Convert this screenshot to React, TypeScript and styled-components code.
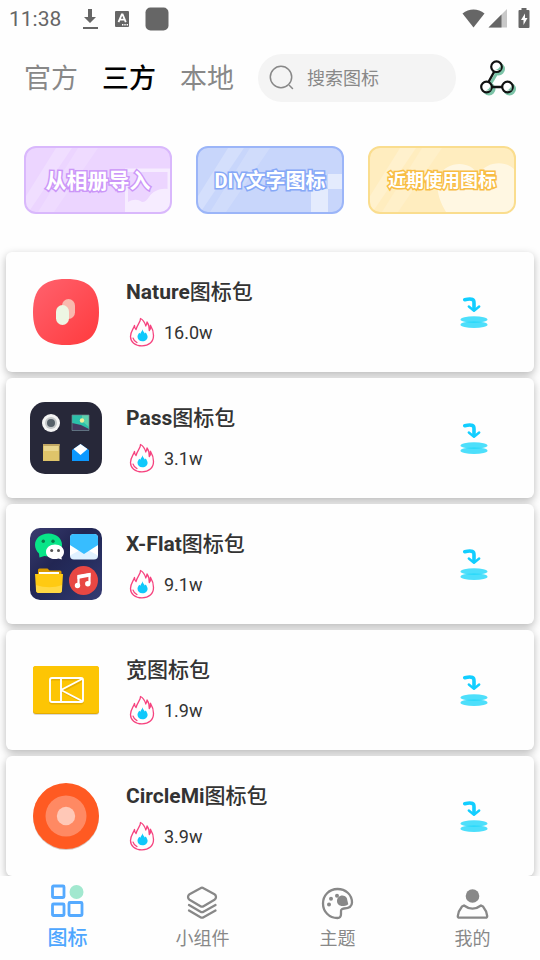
import React from 'react';
import styled, { createGlobalStyle } from 'styled-components';

const GlobalStyle = createGlobalStyle`
  *, *::before, *::after { box-sizing: border-box; }
  body {
    margin: 0;
    background: #fefefe;
    color: #333;
    font-family: Roboto, 'Noto Sans CJK SC', sans-serif;
  }
  button { font: inherit; color: inherit; border: 0; padding: 0; background: none; cursor: pointer; }
  svg { display: block; flex: none; }
`;

const Screen = styled.div`
  display: flex;
  flex-direction: column;
  height: 100vh;
`;

const StatusBar = styled.div`
  display: flex;
  align-items: center;
  justify-content: space-between;
  height: 38px;
  padding: 0 10px 0 9px;
  color: #666;
`;

const StatusGroup = styled.div`
  display: flex;
  align-items: center;
  gap: 15px;
`;

const Clock = styled.time`
  font-size: 21px;
  line-height: 24px;
  margin-right: 5px;
`;

const Header = styled.header`
  display: flex;
  align-items: center;
  gap: 24px;
  padding: 16px 24px 18px;
`;

const Tabs = styled.nav`
  display: flex;
  gap: 24px;
`;

const Tab = styled.button<{ $active?: boolean }>`
  padding-top: 2px;
  font-size: 27px;
  line-height: 40px;
  font-weight: ${(p) => (p.$active ? 500 : 400)};
  color: ${(p) => (p.$active ? '#000' : '#888')};
`;

const SearchBox = styled.label`
  display: flex;
  align-items: center;
  gap: 12px;
  flex: 1;
  min-width: 0;
  height: 48px;
  padding: 0 12px 0 10px;
  border-radius: 24px;
  background: #f4f4f4;
`;

const SearchInput = styled.input`
  flex: 1;
  min-width: 0;
  border: 0;
  padding: 2px 0 0;
  outline: 0;
  background: none;
  font: inherit;
  font-size: 18px;
  line-height: 28px;
  color: #333;
  &::placeholder { color: #888; opacity: 1; }
`;

const Banners = styled.section`
  display: grid;
  grid-template-columns: repeat(3, 1fr);
  gap: 24px;
  padding: 26px 24px 20px;
`;

const Banner = styled.button<{ $edge: string; $fill: string; $ink: string; $size: number }>`
  display: grid;
  place-items: center;
  height: 68px;
  overflow: hidden;
  border: 2px solid ${(p) => p.$edge};
  border-radius: 12px;
  background: ${(p) => p.$fill};
  color: #fff;
  font-size: ${(p) => p.$size}px;
  line-height: 28px;
  font-weight: 700;
  white-space: nowrap;
  -webkit-text-stroke: 3px ${(p) => p.$ink};
  paint-order: stroke fill;
  & > * { grid-area: 1 / 1; }
`;

const BannerArt = styled.svg`
  width: 100%;
  height: 64px;
`;

const BannerText = styled.span`
  z-index: 1;
  padding-top: 2px;
`;

const PackList = styled.ul`
  flex: 1;
  min-height: 0;
  overflow-y: auto;
  scrollbar-width: none;
  display: flex;
  flex-direction: column;
  gap: 6px;
  margin: 0;
  padding: 18px 6px 0;
  list-style: none;
`;

const PackCard = styled.li`
  display: flex;
  align-items: center;
  gap: 24px;
  flex: none;
  height: 120px;
  padding: 0 42px 0 24px;
  border-radius: 6px;
  background: #fefefe;
  box-shadow: 0 3px 9px rgba(0, 0, 0, 0.28);
`;

const PackInfo = styled.div`
  flex: 1;
  min-width: 0;
`;

const PackTitle = styled.h2`
  margin: 0 0 9px;
  font-size: 21px;
  line-height: 32px;
  font-weight: 500;
  color: #333;
`;

const PackName = styled.span`
  font-weight: 700;
`;

const Heat = styled.div`
  display: flex;
  align-items: center;
  gap: 6px;
  font-size: 18px;
  line-height: 32px;
  color: #333;
`;

const BottomNav = styled.nav`
  display: grid;
  grid-template-columns: repeat(4, 1fr);
  flex: none;
  height: 84px;
  background: #fefefe;
`;

const NavItem = styled.button<{ $active?: boolean }>`
  display: flex;
  flex-direction: column;
  align-items: center;
  gap: ${(p) => (p.$active ? 3 : 5)}px;
  padding-top: ${(p) => (p.$active ? 7 : 9)}px;
  font-size: ${(p) => (p.$active ? 20 : 18)}px;
  line-height: ${(p) => (p.$active ? 32 : 26)}px;
  font-weight: ${(p) => (p.$active ? 500 : 400)};
  color: ${(p) => (p.$active ? '#4da6ff' : '#888')};
`;

const DownloadStatus = () => (
  <svg width="18" height="22" viewBox="0 0 18 22" fill="#666">
    <path d="M7 1h4v8h4l-6 6-6-6h4zM2 19h15v2H2z" />
  </svg>
);

const KeyboardStatus = () => (
  <svg width="16" height="16" viewBox="0 0 16 16">
    <rect x="1" width="14" height="16" rx="1" fill="#666" />
    <path d="M4.500 11.200 7.800 3.400h.8l3.200 7.800M6 8.600h4.300" fill="none" stroke="#fff" strokeWidth="1.800" />
    <path d="M8 13h1.400v1.400H8zM10.300 13h1.400v1.400h-1.400zM12.600 13H14v1.400h-1.400z" fill="#fff" />
  </svg>
);

const SquareStatus = () => (
  <svg width="24" height="24" viewBox="0 0 24 24">
    <rect x=".5" y=".5" width="23" height="23" rx="5" fill="#666" />
  </svg>
);

const SignalStatus = () => (
  <svg width="68" height="22" viewBox="0 0 68 22" fill="#666">
    <path d="M.5 5.500C7 .2 16 .2 22.500 5.500L11.500 19.500z" />
    <path d="M26.500 19.500 45 1v18.500z" fill="#c8c8c8" />
    <path d="M26.500 19.500 39.500 6.500v13z" />
    <path d="M59.500 0h5v2h2a1 1 0 0 1 1 1v16a1 1 0 0 1-1 1h-9a1 1 0 0 1-1-1V3a1 1 0 0 1 1-1h2z" />
    <path d="M63 5.500 59 12h2.500v5l4-7H63z" fill="#fff" />
  </svg>
);

const SearchIcon = () => (
  <svg width="27" height="27" viewBox="0 0 27 27" fill="none" stroke="#888" strokeWidth="1.500" strokeLinecap="round">
    <circle cx="13" cy="12" r="10.700" />
    <path d="m21.500 20.500 3 3" />
  </svg>
);

const ShareNodes = () => (
  <svg width="36" height="36" viewBox="0 0 36 36">
    <g fill="#7cc3a7" stroke="#7cc3a7" strokeWidth="3">
      <circle cx="18.500" cy="9" r="5" />
      <circle cx="9" cy="29" r="5" />
      <circle cx="29.500" cy="29" r="5" />
      <path d="m17 13-6 10" />
    </g>
    <path d="M14 12 8.500 22M12 27h11" stroke="#111" strokeWidth="2.400" />
    <g fill="#fff" stroke="#111" strokeWidth="2.200">
      <circle cx="16.500" cy="6.700" r="5.300" />
      <circle cx="6.500" cy="27" r="5.300" />
      <circle cx="27.500" cy="27" r="5.300" />
    </g>
    <g fill="#7cc3a7">
      <path d="M20.500 5v5h-5q4-1 5-5zM10.500 25.500v5h-5q4-1 5-5zM31.500 25.500v5h-5q4-1 5-5z" />
    </g>
  </svg>
);

const Shine = () => (
  <>
    <path d="M30 0h16L4 62H0V48z" fill="#fff" opacity=".22" />
    <path d="M52 0h20L28 64H12z" fill="#fff" opacity=".16" />
  </>
);

const AlbumArt = () => (
  <BannerArt viewBox="0 0 144 64" preserveAspectRatio="none" aria-hidden="true">
    <Shine />
    <path d="M99 20.500h45V64H99zM102 24v30c5-3 10-3 14 0 3 0 5-2 7-5 4-6 11-9 18.500-8V24z" fill="#fff" fillRule="evenodd" opacity=".55" />
  </BannerArt>
);

const LetterArt = () => (
  <BannerArt viewBox="0 0 144 64" preserveAspectRatio="none" aria-hidden="true">
    <Shine />
    <path d="M130 26h14v15h-14v23h-17V41h17z" fill="#fff" opacity=".5" />
  </BannerArt>
);

const HeartArt = () => (
  <BannerArt viewBox="0 0 144 64" preserveAspectRatio="none" aria-hidden="true">
    <Shine />
    <path d="M76 64C66 48 66 34 70 27c6-13 30-16 38 0 8-14 27-15 36-6v43z" fill="#fff" opacity=".55" />
  </BannerArt>
);

const NatureArt = () => (
  <svg width="72" height="72" viewBox="0 0 72 72">
    <defs>
      <linearGradient id="nature" x1="0" y1="0" x2="1" y2="1">
        <stop offset="0" stopColor="#ff626e" />
        <stop offset="1" stopColor="#ff3a3d" />
      </linearGradient>
    </defs>
    <path d="M36 3c23 0 33 10 33 33s-10 33-33 33S3 59 3 36 13 3 36 3z" fill="url(#nature)" />
    <rect x="32" y="23" width="13" height="20" rx="6.500" fill="#f8c4b8" opacity=".9" />
    <rect x="26" y="29" width="13" height="20" rx="6.500" fill="#edf6e3" />
  </svg>
);

const PassArt = () => (
  <svg width="72" height="72" viewBox="0 0 72 72">
    <rect width="72" height="72" rx="15" fill="#272839" />
    <circle cx="21" cy="21" r="9" fill="#f4f4f4" />
    <circle cx="21" cy="21" r="6" fill="#c5c8ca" />
    <circle cx="21" cy="21" r="4" fill="#566069" />
    <path d="M42 13h17v15H42z" fill="#2bc0aa" />
    <path d="M52 13h7v12l-7-6z" fill="#5cd2ad" />
    <circle cx="52" cy="18.500" r="2.200" fill="#f4ed9a" />
    <path d="m42 21 9 2 8 4v2H42z" fill="#44395f" />
    <path d="M42 13h17v15.500H42z" fill="none" stroke="#6d8b91" strokeWidth=".7" />
    <path d="M13 42h16.500v17H13z" fill="#dfc46a" />
    <path d="M14 44h14.500v5H14z" fill="#f0e0a0" opacity=".7" />
    <path d="M13 42h16.500v2H13z" fill="#c2a763" />
    <path d="m50.500 42 8.500 6v11H42V48z" fill="#0c98ff" />
    <path d="m50.500 42 7 5-7 6-7-6z" fill="#fff" />
  </svg>
);

const FlatArt = () => (
  <svg width="72" height="72" viewBox="0 0 72 72">
    <defs>
      <linearGradient id="flat" x1="0" y1="0" x2="1" y2="1">
        <stop offset="0" stopColor="#3a3c70" />
        <stop offset=".4" stopColor="#222653" />
        <stop offset=".6" stopColor="#242c5c" />
        <stop offset="1" stopColor="#363b73" />
      </linearGradient>
    </defs>
    <rect width="72" height="72" rx="10" fill="url(#flat)" />
    <path d="M18.500 5.500C26.500 5.500 32 10.500 32 16.800S26 28.500 18.500 28.500l-4-.6-5 1.600-.5-4C6.500 23.500 5 20 5 16.800 5 10.500 10.500 5.500 18.500 5.500z" fill="#08e588" />
    <circle cx="13.300" cy="13.300" r="1.700" fill="#087f4c" />
    <circle cx="23" cy="13.300" r="1.700" fill="#087f4c" />
    <path d="M25 16.500c5 0 9 3.200 9 7.400 0 2.300-1 4-2.500 5.300l.3 2.300-3.300-1.100c-7 2-12.500-1.700-12.500-6.500 0-4.200 4-7.400 9-7.400z" fill="#fff" />
    <circle cx="21.700" cy="22.500" r="1.500" fill="#555" />
    <circle cx="28.500" cy="22.500" r="1.500" fill="#555" />
    <rect x="40" y="6" width="28" height="25.500" rx="4" fill="#dff1ff" />
    <path d="M40 17v10.500L50 22zM68 17v10.500L58 22z" fill="#fff" />
    <path d="M40 17v-7a4 4 0 0 1 4-4h20a4 4 0 0 1 4 4v7l-14 9z" fill="#37bdff" />
    <path d="M8 42q0-1.500 1.500-1.500h8l2 2H30q1.500 0 1.500 1.500v5H8z" fill="#d99a00" />
    <path d="M9 44h20v4H9z" fill="#fff" />
    <path d="M5 46h28l-1 16q0 3-3 3H9q-3 0-3-3z" fill="#ffca12" />
    <path d="M6 57c9 3 18 3 26 0v5q0 3-3 3H9q-3 0-3-3z" fill="#ffd844" />
    <circle cx="53.500" cy="52.500" r="14.500" fill="#e84743" />
    <path d="M48.500 57.500V48l11-2v9.500" fill="none" stroke="#fff" strokeWidth="2.200" />
    <path d="M47.500 47.500 60.500 45v3.500L47.500 51z" fill="#fff" />
    <circle cx="47.500" cy="57.500" r="2.700" fill="#fff" />
    <circle cx="57.800" cy="55.700" r="2.700" fill="#fff" />
  </svg>
);

const WideArt = () => (
  <svg width="72" height="72" viewBox="0 0 72 72">
    <rect x="3" y="14" width="66" height="47" rx="3" fill="#d9d9d9" />
    <rect x="3" y="12" width="66" height="48" rx="3" fill="#e5ac00" />
    <rect x="3" y="12" width="66" height="47" rx="3" fill="#fdc504" />
    <g fill="none" strokeLinejoin="round" strokeWidth="1.900">
      <g stroke="#dda600" opacity=".7">
        <rect x="20" y="25.500" width="33" height="24" rx="2" />
        <path d="M31 26v23M53 26.500 32 37.500l21 11" />
      </g>
      <g stroke="#fff">
        <rect x="20" y="24" width="33" height="24" rx="2" />
        <path d="M31 24v24M53 24.500 31 36l22 11.500" />
      </g>
    </g>
  </svg>
);

const CircleArt = () => (
  <svg width="72" height="72" viewBox="0 0 72 72">
    <circle cx="36" cy="37" r="33" fill="#d8c8c2" />
    <circle cx="36" cy="36" r="33" fill="#ff5a22" />
    <circle cx="36" cy="36" r="20.500" fill="#ff8963" />
    <circle cx="36" cy="36" r="9.200" fill="#ffc8b7" />
  </svg>
);

const Flame = () => (
  <svg width="32" height="32" viewBox="0 0 32 32" fill="none" strokeLinejoin="round" strokeLinecap="round">
    <path
      d="M14.500 1.500c.4 3-3.500 6.500-4.500 11-1-.8-1.500-2.300-1.500-4C7.500 12 4.500 14.500 4.500 19.500c0 5.300 4.500 9.300 11.500 9.300s11.500-4 11.500-10.300c0-4-1.300-7.500-3-10.200.3 2.300 0 4-1.200 5.200.2-4-.8-6.500-2.300-8.500-.2 1.500-.5 2.800-1.200 4C18.800 5.500 17.500 3 14.500 1.500z"
      stroke="#f6437f"
      strokeWidth="1.300"
    />
    <path d="M7 21c.7 2.300 2 3.800 4 4.600" stroke="#f6437f" strokeWidth="1.200" />
    <path d="M16.500 12.300c.5 2.200 1.700 2.800 2.200 4.200l1-1c1 1.500 1.900 2.800 1.900 4.200 0 2.700-2.100 4.500-5.100 4.500s-5-1.800-5-4.500c0-1.500.8-2.700 1.800-4l1 1c.3-1.500 1.800-2.200 2.200-4.400z" fill="#10c8fb" />
  </svg>
);

const ApplyButton = styled.button`
  display: grid;
  place-items: center;
  width: 36px;
  height: 36px;
`;

const ApplyIcon = () => (
  <svg width="36" height="36" viewBox="0 0 36 36">
    <g fill="none" stroke="#12ceff" strokeLinecap="round" strokeLinejoin="round">
      <path d="M8.700 5.700C12 5 15 4.800 16.500 5.500 18 6 18 7.500 18 9v6.500" strokeWidth="3.600" />
      <path d="m12.800 12.500 5.200 4.200 5.200-4.200" strokeWidth="2.400" />
    </g>
    <ellipse cx="18" cy="25.500" rx="13.500" ry="3.300" fill="#12d4fa" opacity=".75" />
    <ellipse cx="18" cy="30.700" rx="13.500" ry="3.300" fill="#12d4fa" opacity=".75" />
  </svg>
);

const GridIcon = () => (
  <svg width="36" height="36" viewBox="0 0 36 36" fill="none" stroke="#55aaff" strokeWidth="2.800" strokeLinejoin="round">
    <rect x="2.500" y="3" width="11.500" height="11.500" rx="1" />
    <rect x="2.500" y="21" width="11.500" height="11.500" rx="1" />
    <rect x="19" y="19.500" width="13" height="13" rx="1" />
    <circle cx="26.500" cy="9" r="7" fill="#a2e8cf" stroke="none" />
  </svg>
);

const LayersIcon = () => (
  <svg width="36" height="36" viewBox="0 0 36 36" fill="none" stroke="#888" strokeWidth="2.300" strokeLinejoin="round" strokeLinecap="round">
    <path d="M15.500 3.200q1.500-1 3 0L29.500 9.200q1.500 1 1.500 2.800t-1.500 2.700l-11 6.500q-1.500 1-3 0L4.500 14.700Q3 13.700 3 12t1.500-2.800z" />
    <path d="m4 20 11.500 6.700q1.500 1 3 0L30.500 20M4 25.500l11.500 6.700q1.500 1 3 0l12-6.700" />
  </svg>
);

const PaletteIcon = () => (
  <svg width="36" height="36" viewBox="0 0 36 36">
    <path d="M17.500 4C9 4 3 10.500 3 18.500 3 26.500 9 33 17.500 33c2.500 0 3.500-1.500 3.500-4 0-3.500-.5-5 3-5.500 5-.3 8-1.500 8-6C32 9.500 25.500 4 17.500 4z" fill="none" stroke="#888" strokeWidth="2.300" />
    <g fill="#888">
      <circle cx="9" cy="19.500" r="2" />
      <circle cx="11" cy="13.800" r="2" />
      <circle cx="17" cy="10.800" r="2" />
      <path d="M22.500 10.500c3.200 0 4.800 2.200 4.800 4.800l1 4c-2 1.500-4 1.700-5.800 1.700-3.500 0-5.500-2.200-5.500-5s2-5.500 5.500-5.500z" />
    </g>
  </svg>
);

const PersonIcon = () => (
  <svg width="36" height="36" viewBox="0 0 36 36">
    <circle cx="17.500" cy="11" r="6.800" fill="#888" />
    <path d="M9 20.500c6 4.500 11 4.500 17 0l2 1c2.300 2.800 3.800 6 4.200 9.500.1 1-.5 1.700-1.500 1.700H4.300c-1 0-1.600-.7-1.500-1.700.4-3.500 1.900-6.700 4.200-9.500z" fill="none" stroke="#888" strokeWidth="2.300" strokeLinejoin="round" />
  </svg>
);

const packs = [
  { name: 'Nature', heat: '16.0w', Art: NatureArt },
  { name: 'Pass', heat: '3.1w', Art: PassArt },
  { name: 'X-Flat', heat: '9.1w', Art: FlatArt },
  { name: '', prefix: '宽', heat: '1.9w', Art: WideArt },
  { name: 'CircleMi', heat: '3.9w', Art: CircleArt },
];

const banners = [
  { text: '从相册导入', edge: '#d9b8fc', fill: '#ecd5ff', ink: '#cb96f8', size: 21, Art: AlbumArt },
  { text: 'DIY文字图标', edge: '#9bb5f8', fill: '#c8d6fb', ink: '#86a8f7', size: 20, Art: LetterArt },
  { text: '近期使用图标', edge: '#fadd8e', fill: '#ffedbf', ink: '#f8bd45', size: 18, Art: HeartArt },
];

const navItems = [
  { label: '图标', Icon: GridIcon, active: true },
  { label: '小组件', Icon: LayersIcon },
  { label: '主题', Icon: PaletteIcon },
  { label: '我的', Icon: PersonIcon },
];

export default function App() {
  return (
    <>
      <GlobalStyle />
      <Screen>
        <StatusBar>
          <StatusGroup>
            <Clock>11:38</Clock>
            <DownloadStatus />
            <KeyboardStatus />
            <SquareStatus />
          </StatusGroup>
          <SignalStatus />
        </StatusBar>
        <Header>
          <Tabs>
            <Tab>官方</Tab>
            <Tab $active aria-current="page">三方</Tab>
            <Tab>本地</Tab>
          </Tabs>
          <SearchBox>
            <SearchIcon />
            <SearchInput type="search" placeholder="搜索图标" aria-label="搜索图标" />
          </SearchBox>
          <button aria-label="分享">
            <ShareNodes />
          </button>
        </Header>
        <Banners>
          {banners.map(({ text, edge, fill, ink, size, Art }) => (
            <Banner key={text} $edge={edge} $fill={fill} $ink={ink} $size={size}>
              <Art />
              <BannerText>{text}</BannerText>
            </Banner>
          ))}
        </Banners>
        <PackList>
          {packs.map(({ name, prefix = '', heat, Art }) => (
            <PackCard key={name + prefix}>
              <Art />
              <PackInfo>
                <PackTitle>
                  {name && <PackName>{name}</PackName>}
                  {`${prefix}图标包`}
                </PackTitle>
                <Heat>
                  <Flame />
                  {heat}
                </Heat>
              </PackInfo>
              <ApplyButton aria-label={`应用${name}${prefix}图标包`}>
                <ApplyIcon />
              </ApplyButton>
            </PackCard>
          ))}
        </PackList>
        <BottomNav>
          {navItems.map(({ label, Icon, active }) => (
            <NavItem key={label} $active={active} aria-current={active ? 'page' : undefined}>
              <Icon />
              {label}
            </NavItem>
          ))}
        </BottomNav>
      </Screen>
    </>
  );
}
